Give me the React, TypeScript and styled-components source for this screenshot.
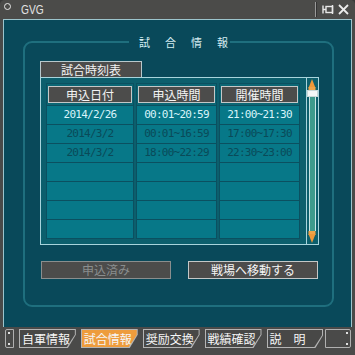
import React from 'react';
import styled, { createGlobalStyle } from 'styled-components';

const JP = `"Noto Sans CJK JP", "DejaVu Sans", sans-serif`;
const MONO = `"DejaVu Sans Mono", "Liberation Mono", monospace`;

const GlobalStyle = createGlobalStyle`
  html, body {
    margin: 0;
    padding: 0;
    background: #3a3a3a;
  }
  body {
    width: 355px;
    height: 355px;
    overflow: hidden;
  }
`;

const Window = styled.div`
  width: 355px;
  height: 355px;
  box-sizing: border-box;
  background: #4a4a49;
  display: flex;
  flex-direction: column;
  border-radius: 5px 5px 0 0;
  overflow: hidden;
`;

const TitleBar = styled.div`
  height: 19px;
  flex: none;
  display: flex;
  align-items: center;
  padding: 0 6px 0 3px;
  background: #4b4b49;
  color: #e4e4e4;
`;

const TitleDot = styled.div`
  width: 5px;
  height: 5px;
  border: 1px solid #e8e8e8;
  border-radius: 50%;
  margin: -6px 0 0 1px;
`;

const TitleText = styled.span`
  font-family: "Liberation Sans", sans-serif;
  font-size: 12px;
  margin-left: 10px;
  transform: scaleX(0.85);
  transform-origin: left center;
  flex: 1;
`;

const TitleSep = styled.div`
  width: 1px;
  height: 15px;
  background: #9a9a9a;
  border-right: 1px solid #333;
  margin-right: 5px;
`;

const TitleIcons = styled.div`
  display: flex;
  align-items: center;
  gap: 4px;
`;

const Body = styled.div`
  flex: none;
  height: 308px;
  box-sizing: border-box;
  margin: 0 3px;
  border: 1px solid #9cc4cc;
  border-bottom: none;
  background: #09495a;
  display: flex;
  flex-direction: column;
`;

const Frame = styled.fieldset`
  margin: 14px 17px 20px 19px;
  padding: 11px 13px 0 15px;
  border: 2px solid #1f6f7e;
  border-radius: 9px;
  flex: 1;
  min-width: 0;
  min-height: 0;
  display: flex;
  flex-direction: column;
`;

const Legend = styled.legend`
  margin: 0 auto;
  padding: 0 2px 0 10px;
  font-family: ${JP};
  font-size: 11px;
  line-height: 16px;
  color: #d6eef2;
  letter-spacing: 15px;
  white-space: nowrap;

  span {
    margin-right: -15px;
  }
`;

const SheetTab = styled.div`
  width: 102px;
  height: 16px;
  box-sizing: border-box;
  background: #4c4c4b;
  border: 1px solid #b8c8cc;
  border-bottom: none;
  color: #f2f2f2;
  font-family: ${JP};
  font-size: 12px;
  line-height: 15px;
  text-align: center;
`;

const Panel = styled.div`
  height: 168px;
  flex: none;
  box-sizing: border-box;
  border: 1px solid #a8d4dc;
  display: flex;
  background: #0c5f6d;
`;

const TableArea = styled.div`
  width: 265px;
  padding: 5px;
  box-sizing: border-box;
`;

const Grid = styled.div`
  display: grid;
  grid-template-columns: 88px 81px 81px;
  column-gap: 2px;
`;

const HeadCell = styled.div`
  height: 23px;
  box-sizing: border-box;
  border: 1px solid #0b5060;
  padding: 2px 1px 0;
  background: #0b6674;
`;

const HeadButton = styled.div`
  height: 17px;
  box-sizing: border-box;
  background: #4c4c4b;
  border: 1px solid #c4c8c8;
  color: #f4f4f4;
  font-family: ${JP};
  font-size: 12px;
  line-height: 15px;
  text-align: center;
`;

const Cell = styled.div<{ $tone: 'active' | 'dim' | 'empty' }>`
  height: 19px;
  box-sizing: border-box;
  border: 1px solid #0b5060;
  border-top: none;
  background: #077888;
  color: ${({ $tone }) => ($tone === 'active' ? '#d8f4fa' : '#0a4a58')};
  font-family: ${MONO};
  font-size: 11px;
  letter-spacing: -0.75px;
  line-height: 18px;
  text-align: center;
`;

const ScrollBar = styled.div`
  width: 11px;
  display: flex;
  flex-direction: column;
  border-left: 1px solid #a8d4dc;
  background: #0c5f6d;
`;

const ScrollThumb = styled.div`
  height: 7px;
  background: #f4f8f8;
  border: 1px solid #c8d8d8;
  box-sizing: border-box;
`;

const ScrollTrack = styled.div`
  flex: 1;
  margin: 0 2px;
  border-left: 1px solid #c8e4e4;
  border-right: 1px solid #c8e4e4;
  background: #3e9a8c;
`;

const ButtonRow = styled.div`
  display: flex;
  justify-content: space-between;
  margin-top: 16px;
  padding: 0 1px 0 1px;
`;

const ActionButton = styled.div<{ $disabled?: boolean }>`
  width: 130px;
  height: 18px;
  box-sizing: border-box;
  background: #4c4c4b;
  border: 1px solid ${({ $disabled }) => ($disabled ? '#8a8e8e' : '#c4c8c8')};
  color: ${({ $disabled }) => ($disabled ? '#8a8e8e' : '#f6f6f6')};
  font-family: ${JP};
  font-size: 12px;
  line-height: 16px;
  text-align: center;
`;

const TabBar = styled.div`
  height: 28px;
  flex: none;
  display: flex;
  align-items: flex-start;
  padding: 2px 4px 0 5px;
  gap: 5px;
  background: #4a4a49;
  box-sizing: border-box;
`;

const Cap = styled.div<{ $end?: boolean }>`
  height: 19px;
  box-sizing: border-box;
  border: 1px solid #b0b0b0;
  border-radius: ${({ $end }) => ($end ? '0 2px 2px 0' : '2px 0 0 2px')};
  display: flex;
  flex-direction: column;
  justify-content: space-between;
  align-items: ${({ $end }) => ($end ? 'flex-end' : 'flex-start')};
  padding: 2px 2px;
  width: ${({ $end }) => ($end ? '26px' : '9px')};
  margin-left: ${({ $end }) => ($end ? '-3px' : '0')};

  i {
    width: 2px;
    height: 2px;
    background: #e0e0e0;
  }
`;

const TabOuter = styled.div`
  width: 58px;
  height: 19px;
  padding: 1px;
  box-sizing: border-box;
  background: #b4b4b4;
  clip-path: polygon(0 0, 100% 0, 100% 30%, calc(100% - 8px) 100%, 0 100%);
`;

const TabInner = styled.div<{ $active?: boolean }>`
  height: 100%;
  background: ${({ $active }) => ($active ? '#ee9c3c' : '#484847')};
  clip-path: polygon(0 0, 100% 0, 100% 28%, calc(100% - 8px) 100%, 0 100%);
  color: #f6f6f6;
  font-family: ${JP};
  font-size: 12px;
  line-height: 17px;
  padding-left: 2px;
  white-space: pre;
  overflow: hidden;
`;

const PinIcon = () => (
  <svg width="12" height="11" viewBox="0 0 12 11">
    <g stroke="#e8e8e8" strokeWidth="1.4" fill="none">
      <line x1="1" y1="1.5" x2="1" y2="9.5" />
      <line x1="1" y1="5.5" x2="4" y2="5.5" />
      <rect x="4" y="2.5" width="6.5" height="6" />
      <line x1="10.5" y1="1" x2="10.5" y2="10" />
    </g>
  </svg>
);

const CloseIcon = () => (
  <svg width="11" height="11" viewBox="0 0 11 11">
    <g stroke="#ececec" strokeWidth="1.8">
      <line x1="1" y1="1" x2="10" y2="10" />
      <line x1="10" y1="1" x2="1" y2="10" />
    </g>
  </svg>
);

const ArrowUp = () => (
  <svg width="10" height="12" viewBox="0 0 10 12">
    <rect x="0" y="0" width="10" height="12" fill="#0c5f6d" />
    <polygon points="5,1 8.5,10 1.5,10" fill="#f09838" />
    <rect x="1.5" y="9" width="7" height="3" fill="#f0a448" />
  </svg>
);

const ArrowDown = () => (
  <svg width="10" height="13" viewBox="0 0 10 13">
    <rect x="0" y="0" width="10" height="13" fill="#0c5f6d" />
    <rect x="1.5" y="0" width="7" height="4" fill="#f0a448" />
    <polygon points="1.5,3 8.5,3 5,12" fill="#f09838" />
  </svg>
);

const headers = ['申込日付', '申込時間', '開催時間'];

const rows: { cells: string[]; tone: 'active' | 'dim' | 'empty' }[] = [
  { cells: ['2014/2/26', '00:01~20:59', '21:00~21:30'], tone: 'active' },
  { cells: ['2014/3/2', '00:01~16:59', '17:00~17:30'], tone: 'dim' },
  { cells: ['2014/3/2', '18:00~22:29', '22:30~23:00'], tone: 'dim' },
  { cells: ['', '', ''], tone: 'empty' },
  { cells: ['', '', ''], tone: 'empty' },
  { cells: ['', '', ''], tone: 'empty' },
  { cells: ['', '', ''], tone: 'empty' },
];

const tabs = [
  { label: '自軍情報' },
  { label: '試合情報', active: true },
  { label: '奨励交換' },
  { label: '戦績確認' },
  { label: '説　明' },
];

export default function App() {
  return (
    <>
      <GlobalStyle />
      <Window>
        <TitleBar>
          <TitleDot />
          <TitleText>GVG</TitleText>
          <TitleSep />
          <TitleIcons>
            <PinIcon />
            <CloseIcon />
          </TitleIcons>
        </TitleBar>

        <Body>
          <Frame>
            <Legend>
              <span>試合情報</span>
            </Legend>
            <SheetTab>試合時刻表</SheetTab>
            <Panel>
              <TableArea>
                <Grid>
                  {headers.map((h) => (
                    <HeadCell key={h}>
                      <HeadButton>{h}</HeadButton>
                    </HeadCell>
                  ))}
                  {rows.map((r, i) =>
                    r.cells.map((c, j) => (
                      <Cell key={`${i}-${j}`} $tone={r.tone}>
                        {c}
                      </Cell>
                    ))
                  )}
                </Grid>
              </TableArea>
              <ScrollBar>
                <ArrowUp />
                <ScrollThumb />
                <ScrollTrack />
                <ArrowDown />
              </ScrollBar>
            </Panel>
            <ButtonRow>
              <ActionButton $disabled>申込済み</ActionButton>
              <ActionButton>戦場へ移動する</ActionButton>
            </ButtonRow>
          </Frame>
        </Body>

        <TabBar>
          <Cap>
            <i />
            <i />
          </Cap>
          {tabs.map((t) => (
            <TabOuter key={t.label}>
              <TabInner $active={t.active}>{t.label}</TabInner>
            </TabOuter>
          ))}
          <Cap $end>
            <i />
            <i />
          </Cap>
        </TabBar>
      </Window>
    </>
  );
}
